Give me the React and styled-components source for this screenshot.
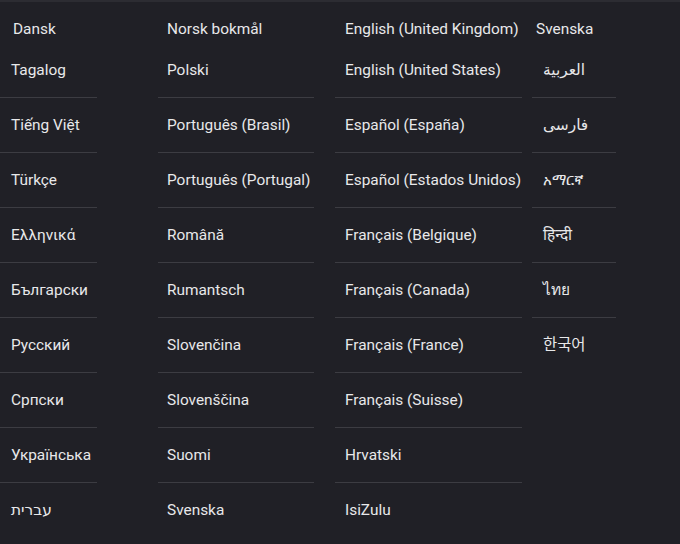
import React from "react";
import styled, { createGlobalStyle } from "styled-components";

const GlobalStyle = createGlobalStyle`
    html, body {
        margin: 0;
        padding: 0;
        background: #202026;
    }
    body {
        font-family: Roboto, "Noto Sans", "DejaVu Sans", "Noto Sans CJK KR", sans-serif;
    }
`;

const columnas = [
    {
        ancho: 97,
        margen: 0,
        pad: 11,
        cabecera: { texto: "Dansk", pad: 13 },
        items: ["Tagalog", "Tiếng Việt", "Türkçe", "Ελληνικά", "Български", "Русский", "Српски", "Українська", "עברית"],
    },
    {
        ancho: 156,
        margen: 61,
        pad: 9,
        cabecera: { texto: "Norsk bokmål", pad: 9 },
        items: ["Polski", "Português (Brasil)", "Português (Portugal)", "Română", "Rumantsch", "Slovenčina", "Slovenščina", "Suomi", "Svenska"],
    },
    {
        ancho: 187,
        margen: 21,
        pad: 10,
        cabecera: { texto: "English (United Kingdom)", pad: 10 },
        items: ["English (United States)", "Español (España)", "Español (Estados Unidos)", "Français (Belgique)", "Français (Canada)", "Français (France)", "Français (Suisse)", "Hrvatski", "IsiZulu"],
    },
    {
        ancho: 84,
        margen: 10,
        pad: 11,
        cabecera: { texto: "Svenska", pad: 4 },
        items: ["العربية", "فارسی", "አማርኛ", "हिन्दी", "ไทย", "한국어"],
    },
];

const App = () => {
    return (
        <>
            <GlobalStyle />
            <Pantalla>
                <BordeSuperior />
                <Cabecera>
                    {columnas.map((c) => (
                        <CeldaCabecera key={c.cabecera.texto} $ancho={c.ancho} $margen={c.margen} $pad={c.cabecera.pad}>
                            {c.cabecera.texto}
                        </CeldaCabecera>
                    ))}
                </Cabecera>
                <Lista>
                    {columnas.map((c) => (
                        <Columna key={c.cabecera.texto} $ancho={c.ancho} $margen={c.margen}>
                            {c.items.map((item) => (
                                <Idioma key={item} $pad={c.pad}>{item}</Idioma>
                            ))}
                        </Columna>
                    ))}
                </Lista>
            </Pantalla>
        </>
    );
};

const Pantalla = styled.div`
    width: 680px;
    height: 544px;
    overflow: hidden;
    background-color: #202026;
    color: #e8e8ea;
    font-size: 15.4px;
`;

const BordeSuperior = styled.div`
    height: 2px;
    background-color: #2c2c32;
`;

const Cabecera = styled.div`
    display: flex;
    height: 40px;
    padding-top: 17px;
    box-sizing: border-box;
`;

const CeldaCabecera = styled.div`
    width: ${(p) => p.$ancho}px;
    margin-left: ${(p) => p.$margen}px;
    padding-left: ${(p) => p.$pad}px;
    box-sizing: border-box;
    line-height: 20px;
    white-space: nowrap;
`;

const Lista = styled.div`
    display: flex;
    align-items: flex-start;
`;

const Columna = styled.div`
    width: ${(p) => p.$ancho}px;
    margin-left: ${(p) => p.$margen}px;
    display: flex;
    flex-direction: column;
`;

const Idioma = styled.div`
    height: 55px;
    box-sizing: border-box;
    display: flex;
    align-items: center;
    padding-left: ${(p) => p.$pad}px;
    white-space: nowrap;
    line-height: 20px;
    & + & {
        border-top: 1px solid #3c3c42;
    }
`;

export default App;
